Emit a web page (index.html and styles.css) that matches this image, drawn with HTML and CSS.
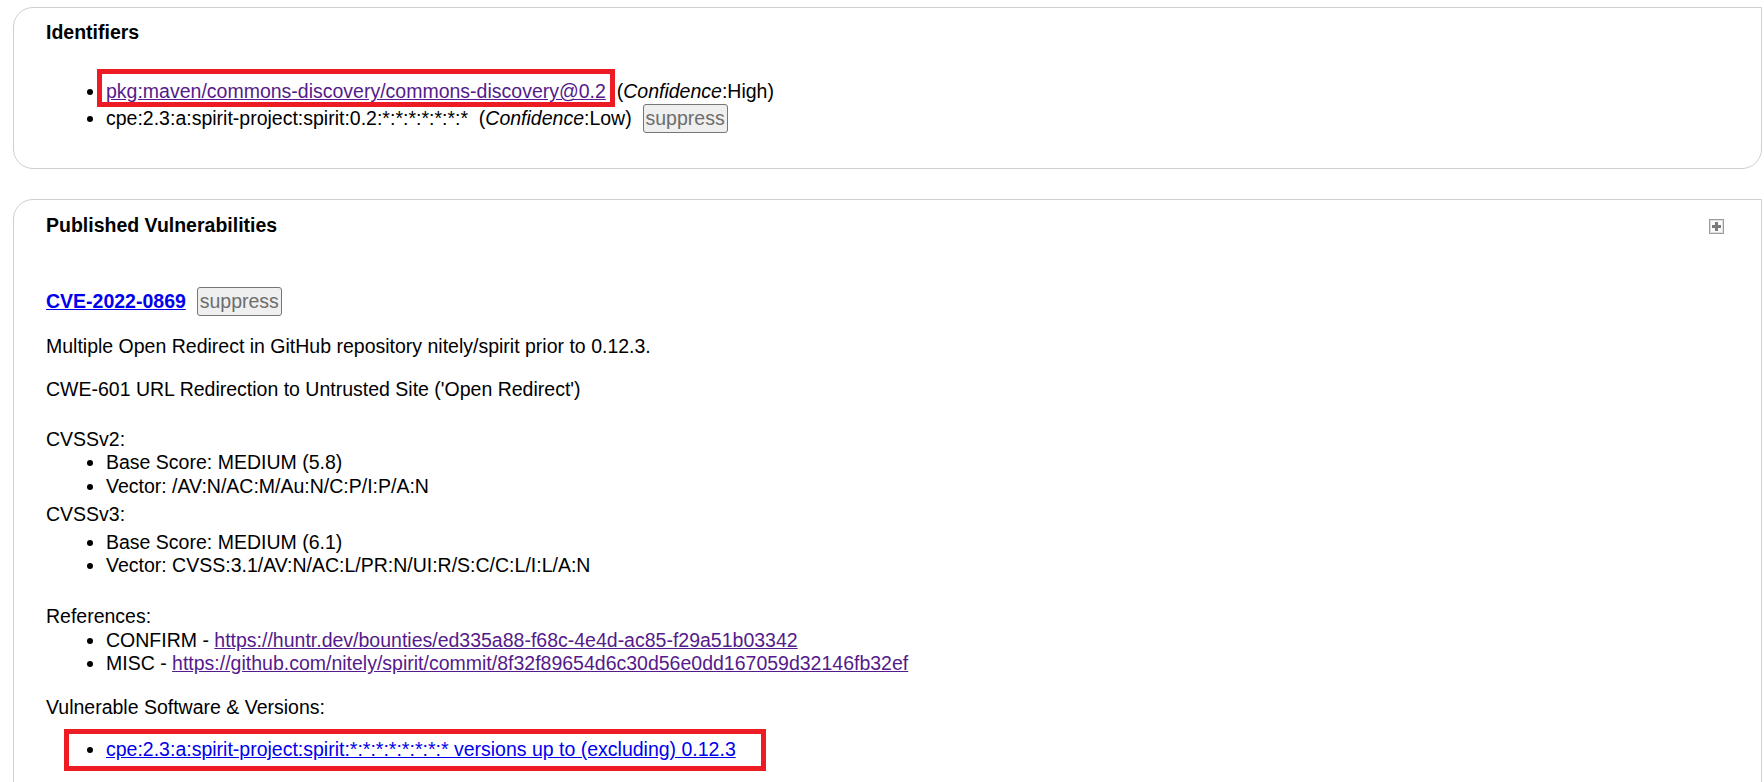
FILE: index.html
```html
<!DOCTYPE html>
<html lang="en">
<head>
  <meta charset="UTF-8" />
  <meta name="viewport" content="width=device-width, initial-scale=1.0"/>
  <title>Dependency-Check Report</title>
  <link rel="stylesheet" href="styles.css">
</head>
<body>
  <div class="container">

    <div class="section">
      <h3 class="subsectionheader">Identifiers</h3>
      <ul class="identifiers">
        <li><span class="marked"><a class="visited" href="#">pkg:maven/commons-discovery/commons-discovery@0.2</a></span>&nbsp;&nbsp;(<i>Confidence</i>:High)</li>
        <li>cpe:2.3:a:spirit-project:spirit:0.2:*:*:*:*:*:*:*&nbsp;&nbsp;(<i>Confidence</i>:Low)&nbsp;&nbsp;<button class="suppress">suppress</button></li>
      </ul>
    </div>

    <div class="section">
      <div class="section-head">
        <h3 class="subsectionheader">Published Vulnerabilities</h3>
        <svg class="expand" width="15" height="15" viewBox="0 0 15 15">
          <rect x="0.5" y="0.5" width="14" height="14" fill="#fafafa" stroke="#9c9c9c"/>
          <rect x="1.5" y="1.5" width="12" height="12" fill="none" stroke="#dedede"/>
          <rect x="6" y="3" width="3" height="9" fill="#7a7a7a"/>
          <rect x="3" y="6" width="9" height="3" fill="#7a7a7a"/>
        </svg>
      </div>

      <p class="cve"><b><a href="#">CVE-2022-0869</a></b>&nbsp;&nbsp;<button class="suppress">suppress</button></p>
      <p>Multiple Open Redirect in GitHub repository nitely/spirit prior to 0.12.3.</p>
      <p class="cwe">CWE-601 URL Redirection to Untrusted Site ('Open Redirect')</p>

      <div>CVSSv2:</div>
      <ul>
        <li>Base Score: MEDIUM (5.8)</li>
        <li>Vector: /AV:N/AC:M/Au:N/C:P/I:P/A:N</li>
      </ul>
      <div class="cvss3">CVSSv3:</div>
      <ul class="cvss3-list">
        <li>Base Score: MEDIUM (6.1)</li>
        <li>Vector: CVSS:3.1/AV:N/AC:L/PR:N/UI:R/S:C/C:L/I:L/A:N</li>
      </ul>

      <div class="refs">References:</div>
      <ul>
        <li>CONFIRM - <a class="visited" href="#">https://huntr.dev/bounties/ed335a88-f68c-4e4d-ac85-f29a51b03342</a></li>
        <li>MISC - <a class="visited" href="#">https://github.com/nitely/spirit/commit/8f32f89654d6c30d56e0dd167059d32146fb32ef</a></li>
      </ul>

      <div class="vuln-soft">Vulnerable Software &amp; Versions:</div>
      <ul class="marked-list">
        <li><a href="#">cpe:2.3:a:spirit-project:spirit:*:*:*:*:*:*:*:* versions up to (excluding) 0.12.3</a></li>
      </ul>
    </div>

  </div>
</body>
</html>
```

FILE: styles.css
```css
body {
  font-family: "Liberation Sans", Arial, sans-serif;
  font-size: 19.5px;
  line-height: 23.4px;
  color: #000;
  background: #fff;
  margin: 0;
  padding: 0;
}

a {
  color: #0000ee;
}

a.visited {
  color: #551a8b;
}

.container {
  padding: 7px 2px 0 13px;
}

.section {
  border: 1px solid #cfcfcf;
  border-radius: 20px 0 20px 20px;
  padding: 13px 31px 35px 32px;
  margin-bottom: 30px;
}

.section + .section {
  padding-top: 14px;
}

.subsectionheader {
  font-size: 19.5px;
  line-height: 23.4px;
  margin: 0;
}

.section-head {
  display: flex;
  justify-content: space-between;
  align-items: center;
}

.expand {
  margin-right: 6px;
  margin-top: 2px;
}

ul {
  margin: 0;
  padding-left: 60px;
}

p {
  margin: 19px 0;
}

.identifiers {
  margin-top: 36px;
}

.marked {
  position: relative;
}

/* red annotation frame drawn over the link */
.marked::after {
  content: "";
  position: absolute;
  top: -11.5px;
  bottom: -4.5px;
  left: -9px;
  right: -9px;
  border: 5px solid #ed1c24;
}

.suppress {
  font-family: "Liberation Sans", Arial, sans-serif;
  font-size: 19.5px;
  line-height: 23px;
  color: #6d6d6d;
  background: #efefef;
  border: 1px solid #767676;
  border-radius: 3px;
  padding: 2px 2px;
  vertical-align: baseline;
}

.cve {
  margin-top: 50px;
}

.cwe {
  margin-bottom: 27px;
}

.cvss3 {
  margin-top: 5px;
}

.cvss3-list {
  margin-top: 4px;
}

.refs {
  margin-top: 28px;
}

.vuln-soft {
  margin-top: 20px;
}

.marked-list {
  width: fit-content;
  border: 5px solid #ed1c24;
  margin: 10px 0 0 18px;
  padding: 4px 25px 4px 37px;
}
```
